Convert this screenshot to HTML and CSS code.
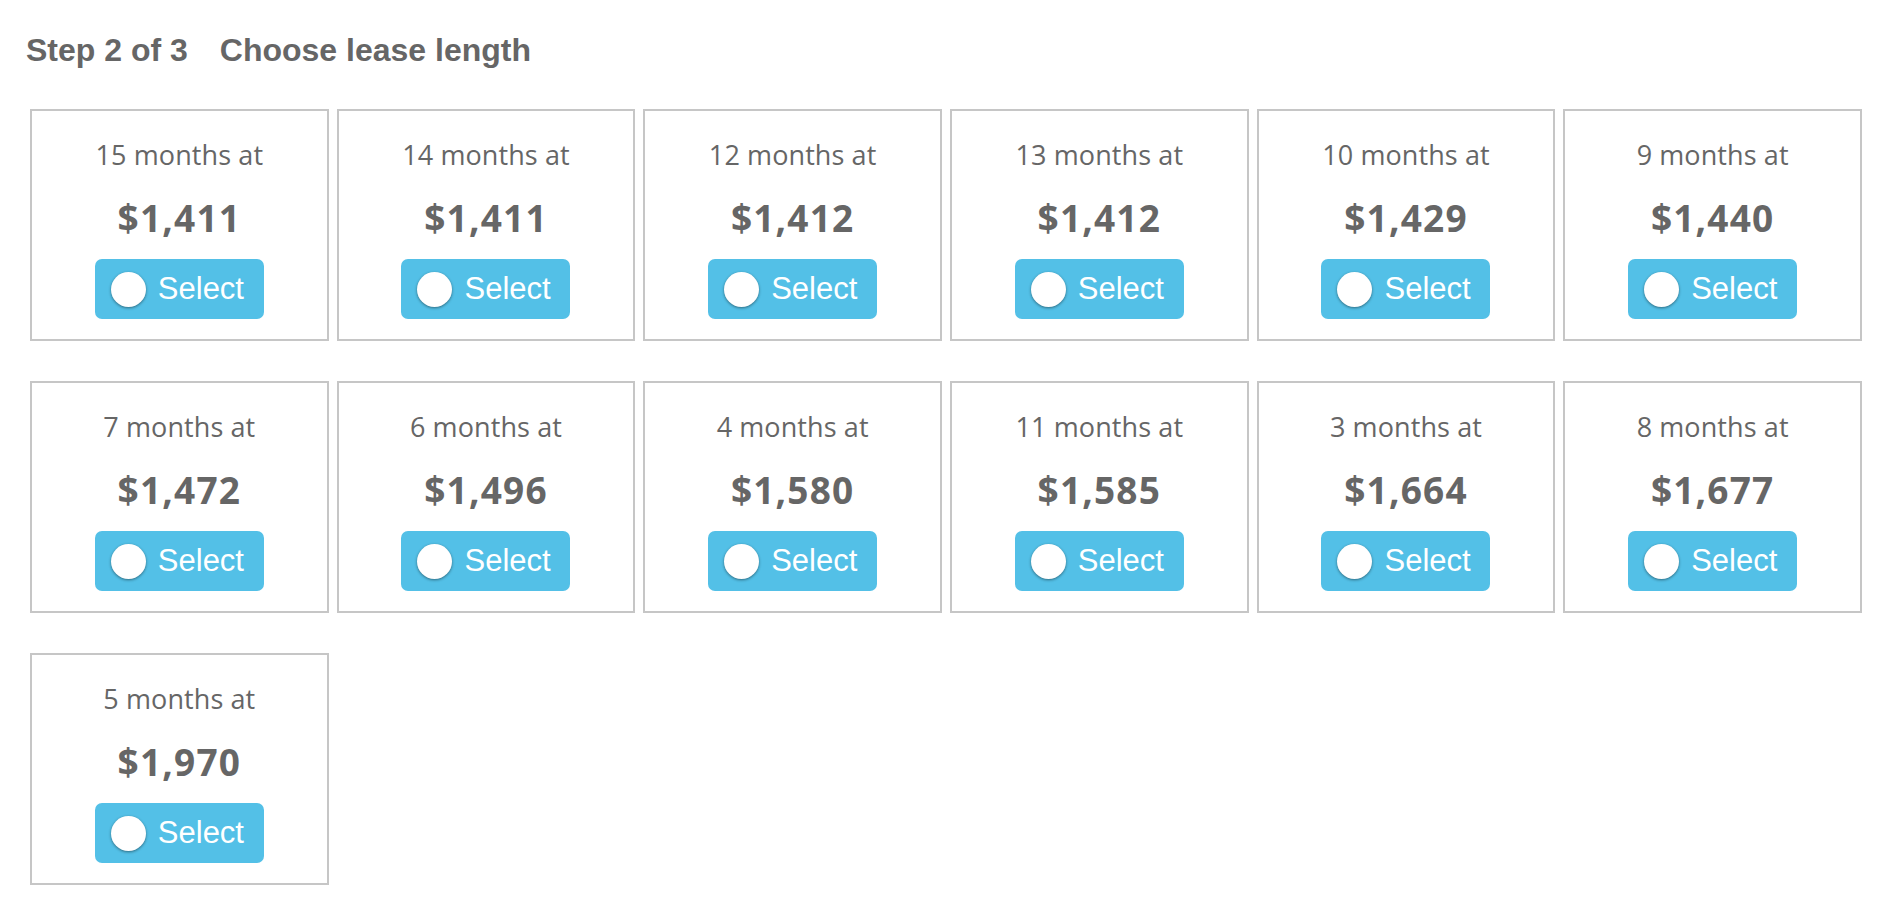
FILE: index.html
```html
<!DOCTYPE html>
<html lang="en">
<head>
<meta charset="utf-8">
<title>Choose lease length</title>
<link rel="stylesheet" href="styles.css">
</head>
<body>
<div class="page">
  <h2 class="step-title"><span class="step-num">Step 2 of 3</span><span class="step-name">Choose lease length</span></h2>
  <div class="lease-grid">
    <div class="lease-card"><div class="lease-term">15 months at</div><div class="lease-price">$1,411</div><button class="select-btn"><span class="radio"></span><span class="select-label">Select</span></button></div>
    <div class="lease-card"><div class="lease-term">14 months at</div><div class="lease-price">$1,411</div><button class="select-btn"><span class="radio"></span><span class="select-label">Select</span></button></div>
    <div class="lease-card"><div class="lease-term">12 months at</div><div class="lease-price">$1,412</div><button class="select-btn"><span class="radio"></span><span class="select-label">Select</span></button></div>
    <div class="lease-card"><div class="lease-term">13 months at</div><div class="lease-price">$1,412</div><button class="select-btn"><span class="radio"></span><span class="select-label">Select</span></button></div>
    <div class="lease-card"><div class="lease-term">10 months at</div><div class="lease-price">$1,429</div><button class="select-btn"><span class="radio"></span><span class="select-label">Select</span></button></div>
    <div class="lease-card"><div class="lease-term">9 months at</div><div class="lease-price">$1,440</div><button class="select-btn"><span class="radio"></span><span class="select-label">Select</span></button></div>
    <div class="lease-card"><div class="lease-term">7 months at</div><div class="lease-price">$1,472</div><button class="select-btn"><span class="radio"></span><span class="select-label">Select</span></button></div>
    <div class="lease-card"><div class="lease-term">6 months at</div><div class="lease-price">$1,496</div><button class="select-btn"><span class="radio"></span><span class="select-label">Select</span></button></div>
    <div class="lease-card"><div class="lease-term">4 months at</div><div class="lease-price">$1,580</div><button class="select-btn"><span class="radio"></span><span class="select-label">Select</span></button></div>
    <div class="lease-card"><div class="lease-term">11 months at</div><div class="lease-price">$1,585</div><button class="select-btn"><span class="radio"></span><span class="select-label">Select</span></button></div>
    <div class="lease-card"><div class="lease-term">3 months at</div><div class="lease-price">$1,664</div><button class="select-btn"><span class="radio"></span><span class="select-label">Select</span></button></div>
    <div class="lease-card"><div class="lease-term">8 months at</div><div class="lease-price">$1,677</div><button class="select-btn"><span class="radio"></span><span class="select-label">Select</span></button></div>
    <div class="lease-card"><div class="lease-term">5 months at</div><div class="lease-price">$1,970</div><button class="select-btn"><span class="radio"></span><span class="select-label">Select</span></button></div>
  </div>
</div>
</body>
</html>
```
FILE: styles.css
```css
html, body {
  margin: 0;
  padding: 0;
  background: #ffffff;
}

.page {
  padding: 30px 20px 0 30px;
}

.step-title {
  margin: 0 0 39px 0;
  font-family: "Liberation Sans", Arial, sans-serif;
  font-weight: bold;
  font-size: 32px;
  line-height: 40px;
  color: #666666;
  display: flex;
}

.step-num {
  margin-left: -4px;
  margin-right: 32px;
}

.lease-grid {
  display: grid;
  grid-template-columns: repeat(6, 1fr);
  column-gap: 8px;
  row-gap: 40px;
}

.lease-card {
  border: 2px solid #c6c6c6;
  padding: 26px 0 20px 0;
  display: flex;
  flex-direction: column;
  align-items: center;
  font-family: "Open Sans", "Noto Sans", sans-serif;
  color: #666666;
}

.lease-term {
  font-size: 27px;
  line-height: 36px;
  letter-spacing: 0.1px;
}

.lease-price {
  margin-top: 23px;
  font-size: 37px;
  font-weight: bold;
  line-height: 44px;
  letter-spacing: 1.2px;
  color: #666666;
}

.select-btn {
  margin-top: 19px;
  width: 169px;
  height: 60px;
  padding: 0 0 0 16px;
  border: none;
  border-radius: 7px;
  background: #53c0e7;
  display: flex;
  align-items: center;
  gap: 12px;
  cursor: pointer;
}

.radio {
  width: 35px;
  height: 35px;
  border-radius: 50%;
  background: #ffffff;
  box-shadow: 0 1px 3px rgba(0, 0, 0, 0.45);
  flex: none;
}

.select-label {
  font-family: "Liberation Sans", Arial, sans-serif;
  font-size: 31px;
  color: #ffffff;
  line-height: 36px;
}
```
